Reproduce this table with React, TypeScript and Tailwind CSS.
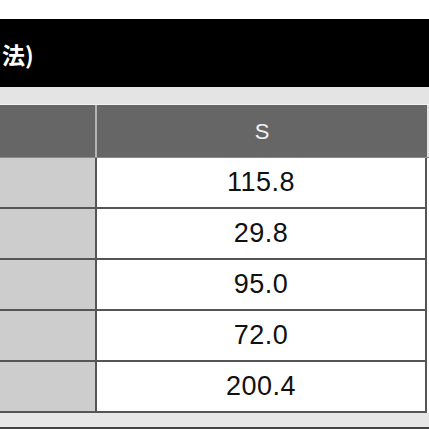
const rows = ["115.8", "29.8", "95.0", "72.0", "200.4"];

export default function App() {
  return (
    <div className="w-[429px] h-[429px] bg-white overflow-hidden flex flex-col" style={{ fontFamily: '"Liberation Sans", Arial, sans-serif' }}>
      <div className="h-[19px] shrink-0 bg-white" />
      <div className="h-[68px] shrink-0 bg-black flex items-center pl-[2px]">
        <span className="text-[23px] font-bold text-white leading-none mt-[2px]" style={{ fontFamily: '"Noto Sans CJK JP", sans-serif' }}>
          法)
        </span>
      </div>
      <div className="h-[18px] shrink-0 bg-[#e4e4e4] border-b border-[#f2f2f2]" />
      <div className="w-[429px] flex flex-col">
        <div className="flex h-[53px] border-b border-[#8a8a8a]">
          <div className="w-[97px] shrink-0 bg-[#666666] border-r-2 border-[#b5b5b5]" />
          <div className="w-[330px] shrink-0 bg-[#666666] flex items-center justify-center text-[22px] text-[#f0f0f0]">S</div>
          <div className="flex-1 bg-[#e4e4e4]" />
        </div>
        {rows.map((v) => (
          <div key={v} className="flex h-[51px]">
            <div className="w-[97px] shrink-0 bg-[#cdcdcd] border-r-2 border-b-2 border-[#555555]" />
            <div className="w-[330px] shrink-0 bg-white border-r-2 border-b-2 border-[#555555] flex items-center justify-center text-[27px] text-[#111111] tracking-[0.5px]">
              {v}
            </div>
            <div className="flex-1 bg-white" />
          </div>
        ))}
      </div>
      <div className="flex-1 bg-[#e6e6e6] border-b-2 border-[#444444]" />
    </div>
  );
}
